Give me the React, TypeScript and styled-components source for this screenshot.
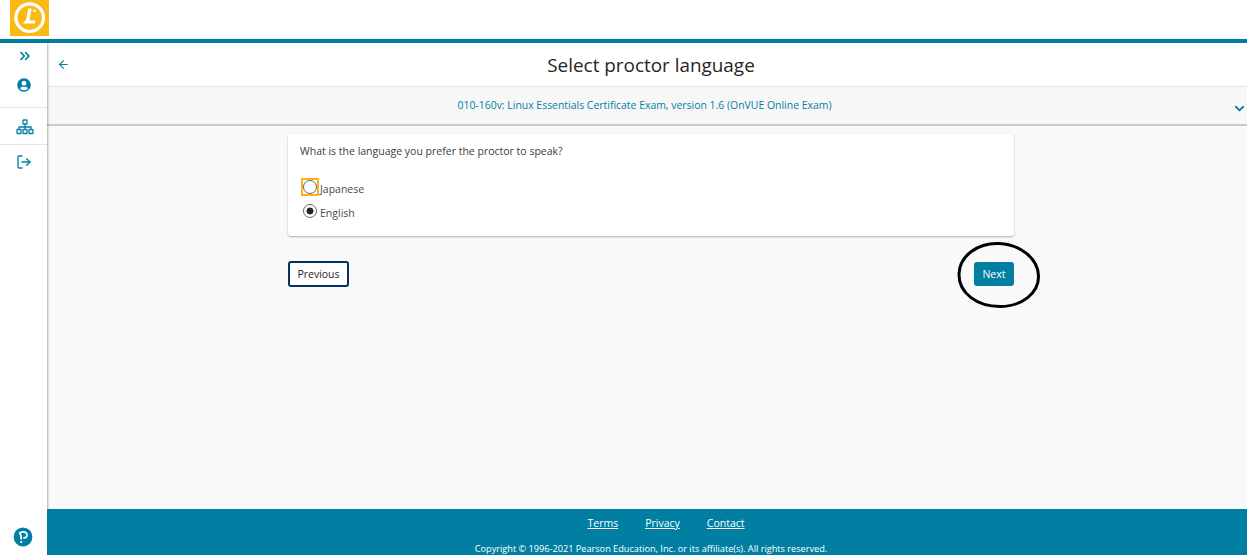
import React from "react";
import styled, { createGlobalStyle } from "styled-components";
import { ArrowLeft, ChevronDown, ChevronsRight, LogOut } from "lucide-react";
import { FaUserCircle } from "react-icons/fa";

const TEAL = "#007fa3";

const GlobalStyle = createGlobalStyle`
  html, body {
    margin: 0;
    padding: 0;
    height: 100%;
    overflow: hidden;
    background: #f9f9f9;
  }
  body {
    font-family: "Open Sans", "Liberation Sans", sans-serif;
    color: #252525;
  }
`;

const App = () => {
  return (
    <Page>
      <GlobalStyle />
      <TopBar>
        <Logo>
          <svg width="39" height="36" viewBox="0 0 39 36">
            <rect width="39" height="36" fill="#fdb913" />
            <circle cx="19.7" cy="17.7" r="13.8" fill="#fdb913" stroke="#fff" strokeWidth="3.2" />
            <path d="M18.2 8.5 L16 20 L12.8 23.6 L24.6 23.6 L25.8 20.6 L19.6 20.6 L21.6 8.5 Z" fill="#fff" />
            <circle cx="24.5" cy="10.8" r="1.4" fill="#fff" />
          </svg>
        </Logo>
      </TopBar>
      <Body>
        <Sidebar>
          <SideGroup>
            <ExpandIcon>
              <ChevronsRight size={16} color={TEAL} strokeWidth={2.4} />
            </ExpandIcon>
            <FaUserCircle size={14} color={TEAL} />
          </SideGroup>
          <SideItem>
            <NetworkIcon width="18" height="16" viewBox="0 0 18 16" fill="none" stroke={TEAL} strokeWidth="1.3">
              <rect x="7" y="1" width="4" height="4" rx="0.6" />
              <path d="M9 5 V10.5 M3 10.5 V8 H15 V10.5" />
              <rect x="1" y="10.5" width="4" height="4" rx="0.6" />
              <rect x="7" y="10.5" width="4" height="4" rx="0.6" />
              <rect x="13" y="10.5" width="4" height="4" rx="0.6" />
            </NetworkIcon>
          </SideItem>
          <SideItem $plain>
            <LogOut size={16} color={TEAL} strokeWidth={2} />
          </SideItem>
          <SideLogo>
            <svg width="20" height="20" viewBox="0 0 20 20">
              <circle cx="10" cy="10" r="9.4" fill={TEAL} />
              <path
                d="M8.2 12.6 C8.2 9.5 8 7.5 6.8 5.9 C8 5 9.5 4.7 10.8 4.8 C12.9 5 14 6.4 14 8 C14 9.9 12.4 11.1 10.2 11"
                fill="none"
                stroke="#fff"
                strokeWidth="1.7"
              />
              <circle cx="8.2" cy="15" r="1.1" fill="#fff" />
            </svg>
          </SideLogo>
        </Sidebar>
        <Main>
          <Header>
            <BackButton>
              <ArrowLeft size={13} color={TEAL} strokeWidth={2} />
            </BackButton>
            <Title>Select proctor language</Title>
          </Header>
          <ExamBar>
            <ExamLink>010-160v: Linux Essentials Certificate Exam, version 1.6 (OnVUE Online Exam)</ExamLink>
            <ExamToggle>
              <ChevronDown size={15} color={TEAL} strokeWidth={3} />
            </ExamToggle>
          </ExamBar>
          <Content>
            <Column>
              <Card>
                <Question>What is the language you prefer the proctor to speak?</Question>
                <Options>
                  <Option>
                    <RadioSlot $focused>
                      <Radio />
                    </RadioSlot>
                    <OptionText>Japanese</OptionText>
                  </Option>
                  <Option>
                    <RadioSlot>
                      <Radio $checked />
                    </RadioSlot>
                    <OptionText>English</OptionText>
                  </Option>
                </Options>
              </Card>
              <Actions>
                <PreviousButton>Previous</PreviousButton>
                <NextWrap>
                  <NextButton>Next</NextButton>
                  <Circled width="84" height="68" viewBox="0 0 84 68">
                    <path
                      d="M42 2.5 C22 1.5 2.5 14 2 33 C1.5 52 20 65.5 43 65.5 C65 65.5 82 52 81.5 35 C81 17 63 3.5 42 2.5 Z"
                      fill="none"
                      stroke="#000"
                      strokeWidth="3"
                    />
                  </Circled>
                </NextWrap>
              </Actions>
            </Column>
          </Content>
          <Footer>
            <FooterLinks>
              <FooterLink>Terms</FooterLink>
              <FooterLink>Privacy</FooterLink>
              <FooterLink>Contact</FooterLink>
            </FooterLinks>
            <Copyright>Copyright © 1996-2021 Pearson Education, Inc. or its affiliate(s). All rights reserved.</Copyright>
          </Footer>
        </Main>
      </Body>
    </Page>
  );
};

export default App;

const Page = styled.div`
  display: flex;
  flex-direction: column;
  width: 1247px;
  height: 555px;
  overflow: hidden;
`;
const TopBar = styled.div`
  flex: none;
  height: 39px;
  padding-left: 10px;
  background: #fff;
  border-bottom: 4px solid ${TEAL};
`;
const Logo = styled.div`
  width: 39px;
  height: 36px;
  svg {
    display: block;
  }
`;
const Body = styled.div`
  flex: 1;
  display: flex;
  min-height: 0;
`;
const Sidebar = styled.div`
  flex: none;
  position: relative;
  z-index: 1;
  display: flex;
  flex-direction: column;
  width: 47px;
  background: #fff;
  box-shadow: 1px 0 2px rgba(0, 0, 0, 0.3);
`;
const SideGroup = styled.div`
  display: flex;
  flex-direction: column;
  align-items: center;
  gap: 14px;
  height: 65px;
  padding-top: 5px;
  box-sizing: border-box;
  border-bottom: 1px solid #e3e3e3;
`;
const ExpandIcon = styled.div`
  line-height: 0;
  margin-left: 3px;
`;
const SideItem = styled.div<{ $plain?: boolean }>`
  display: flex;
  align-items: center;
  justify-content: center;
  height: ${(p) => (p.$plain ? "34px" : "37px")};
  box-sizing: border-box;
  border-bottom: ${(p) => (p.$plain ? "0" : "1px solid #e3e3e3")};
`;
const NetworkIcon = styled.svg`
  margin: 1px 0 0 3px;
`;
const SideLogo = styled.div`
  margin-top: auto;
  padding: 0 2px 8px 0;
  display: flex;
  justify-content: center;
  svg {
    display: block;
  }
`;
const Main = styled.div`
  flex: 1;
  display: flex;
  flex-direction: column;
  min-width: 0;
  background: #f9f9f9;
`;
const Header = styled.div`
  flex: none;
  display: flex;
  align-items: center;
  justify-content: center;
  position: relative;
  height: 43px;
  background: #fff;
  border-bottom: 1px solid #e6e6e6;
`;
const BackButton = styled.div`
  position: absolute;
  left: 10px;
  top: 15px;
  line-height: 0;
`;
const Title = styled.h1`
  margin: 0 0 0 8px;
  font-size: 18.9px;
  font-weight: 400;
  line-height: 28px;
  color: #252525;
`;
const ExamBar = styled.div`
  flex: none;
  position: relative;
  display: flex;
  justify-content: center;
  height: 39px;
  padding: 10px 5px 0 0;
  box-sizing: border-box;
  background: #f7f7f7;
  border-bottom: 2px solid #c9c9c9;
`;
const ExamLink = styled.span`
  font-size: 10.45px;
  line-height: 16px;
  color: ${TEAL};
`;
const ExamToggle = styled.div`
  position: absolute;
  right: 0;
  top: 14px;
  line-height: 0;
`;
const Content = styled.div`
  flex: 1;
  display: flex;
  justify-content: center;
  padding: 8px 0 0 8px;
  min-height: 0;
`;
const Column = styled.div`
  width: 726px;
`;
const Card = styled.div`
  height: 102px;
  padding: 9px 12px 0;
  box-sizing: border-box;
  background: #fff;
  border-radius: 3px;
  box-shadow: 0 1px 2px rgba(0, 0, 0, 0.3);
`;
const Question = styled.div`
  font-size: 10.5px;
  line-height: 16px;
  color: #3d3d3d;
`;
const Options = styled.div`
  display: flex;
  flex-direction: column;
  gap: 6px;
  margin: 19px 0 0 1px;
`;
const Option = styled.div`
  display: flex;
  align-items: center;
  height: 18px;
`;
const RadioSlot = styled.div<{ $focused?: boolean }>`
  flex: none;
  display: flex;
  align-items: center;
  justify-content: center;
  width: 18px;
  height: 18px;
  box-sizing: border-box;
  border: 2px solid ${(p) => (p.$focused ? "#fdb01a" : "transparent")};
`;
const Radio = styled.span<{ $checked?: boolean }>`
  flex: none;
  display: block;
  width: 12px;
  height: 12px;
  border: 1px solid #666;
  border-radius: 50%;
  background: ${(p) => (p.$checked ? "radial-gradient(circle, #252525 0 3.2px, #fff 3.8px)" : "#fff")};
`;
const OptionText = styled.span`
  margin: 4px 0 0 1px;
  font-size: 10.5px;
  line-height: 16px;
  color: #4a4a4a;
`;
const Actions = styled.div`
  display: flex;
  align-items: flex-start;
  justify-content: space-between;
  margin-top: 25px;
`;
const PreviousButton = styled.button`
  width: 61px;
  height: 26px;
  padding: 0;
  background: #fff;
  border: 2px solid #05315e;
  border-radius: 3px;
  font-family: inherit;
  font-size: 10.5px;
  color: #252525;
`;
const NextWrap = styled.div`
  position: relative;
  margin-top: 1px;
`;
const NextButton = styled.button`
  display: block;
  width: 40px;
  height: 24px;
  padding: 0;
  background: ${TEAL};
  border: 0;
  border-radius: 3px;
  font-family: inherit;
  font-size: 10.5px;
  color: #fff;
`;
const Circled = styled.svg`
  position: absolute;
  left: -17px;
  top: -21px;
  pointer-events: none;
`;
const Footer = styled.div`
  flex: none;
  position: relative;
  z-index: 2;
  display: flex;
  flex-direction: column;
  align-items: center;
  height: 46px;
  overflow: hidden;
  background: ${TEAL};
  color: #fff;
`;
const FooterLinks = styled.div`
  display: flex;
  gap: 27px;
  margin: 6px 0 0 38px;
`;
const FooterLink = styled.a`
  font-size: 10.5px;
  line-height: 16px;
  text-decoration: underline;
`;
const Copyright = styled.div`
  margin: 11px 0 0 8px;
  font-size: 9.16px;
  line-height: 14px;
  white-space: nowrap;
`;
